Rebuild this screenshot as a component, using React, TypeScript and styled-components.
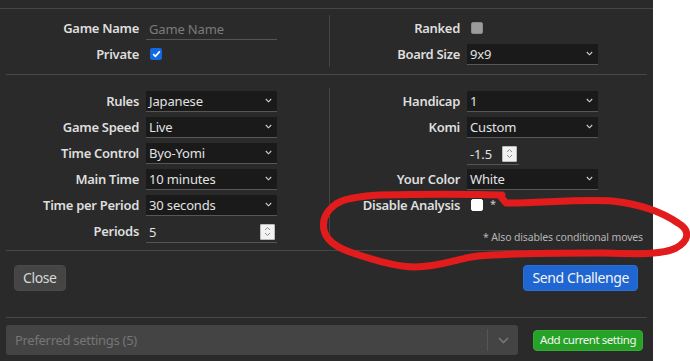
import React from "react";
import styled, { createGlobalStyle } from "styled-components";

const GlobalStyle = createGlobalStyle`
  html, body { margin: 0; padding: 0; background: #ffffff; }
  body { font-family: "Noto Sans", "Open Sans", sans-serif; }
  * { box-sizing: border-box; }
`;

const Page = styled.div`
  position: relative;
  width: 690px;
  height: 361px;
  overflow: hidden;
  background: #ffffff;
`;

const Panel = styled.div`
  width: 653px;
  height: 361px;
  background: #2a2a2a;
  color: #dcdcdc;
  display: flex;
  flex-direction: column;
`;

const TopBar = styled.div`
  height: 9px;
  border-bottom: 1px solid #464646;
  flex: none;
`;

const Section = styled.div<{ $pt: number; $pb: number }>`
  display: grid;
  grid-template-columns: 329px 1fr;
  padding: ${(p) => p.$pt}px 0 ${(p) => p.$pb}px;
  flex: none;
`;

const Rule = styled.div`
  height: 1px;
  margin: 0 6px;
  background: #474747;
  flex: none;
`;

const Column = styled.div<{ $labelW: number; $divider?: boolean }>`
  display: grid;
  grid-template-columns: ${(p) => p.$labelW}px 131px 1fr;
  column-gap: 7px;
  grid-auto-rows: 26px;
  align-items: center;
  border-left: ${(p) => (p.$divider ? "1px solid #444" : "none")};
`;

const Label = styled.div`
  text-align: right;
  font-size: 13px;
  font-weight: 600;
  letter-spacing: -0.3px;
  color: #dedede;
  white-space: nowrap;
  grid-column: 1;
`;

const Field = styled.div`
  grid-column: 2;
  display: flex;
  align-items: center;
`;

const Note = styled.div`
  grid-column: 1 / -1;
  text-align: right;
  padding-right: 10px;
  font-size: 10.5px;
  letter-spacing: -0.15px;
  color: #b4b4b4;
  align-self: end;
  line-height: 15px;
  margin-bottom: -1px;
`;

const SelectBox = styled.div`
  width: 131px;
  height: 21px;
  background: #1a1a1a;
  border-bottom: 1px solid #575757;
  display: flex;
  align-items: center;
  justify-content: space-between;
  padding: 0 5px 0 3px;
  font-size: 13px;
  letter-spacing: -0.15px;
  color: #e2e2e2;
`;

const TextInput = styled.div<{ $w: number }>`
  width: ${(p) => p.$w}px;
  height: 22px;
  border-bottom: 1px solid #555;
  display: flex;
  align-items: center;
  justify-content: space-between;
  padding: 0 2px 0 3px;
  font-size: 13px;
  letter-spacing: -0.15px;
  color: #e2e2e2;
  margin-top: 2px;
`;

const Placeholder = styled.span`
  color: #7b7b7b;
`;

const Spinner = styled.span`
  width: 15px;
  height: 16px;
  background: #f2f2f2;
  border: 1px solid #bdbdbd;
  border-radius: 1px;
  display: flex;
  align-items: center;
  justify-content: center;
`;

const Check = styled.span<{ $kind: "blue" | "gray" | "white" }>`
  width: 12px;
  height: 12px;
  margin-left: 4px;
  border-radius: 2px;
  display: inline-flex;
  align-items: center;
  justify-content: center;
  background: ${(p) =>
    p.$kind === "blue" ? "#1469e0" : p.$kind === "gray" ? "#9c9c9c" : "#ffffff"};
  border: 1px solid
    ${(p) => (p.$kind === "blue" ? "#1469e0" : p.$kind === "gray" ? "#8a8a8a" : "#ffffff")};
`;

const Star = styled.span`
  margin-left: 7px;
  font-size: 11px;
  color: #cfcfcf;
  margin-top: -4px;
`;

const Footer = styled.div`
  display: flex;
  justify-content: space-between;
  align-items: center;
  padding: 14px 15px 26px 14px;
  flex: none;
`;

const Button = styled.button<{ $variant: "plain" | "primary" | "success" }>`
  font-family: "Noto Sans", "Open Sans", sans-serif;
  border: 1px solid
    ${(p) => (p.$variant === "primary" ? "#2a6fd8" : p.$variant === "success" ? "#35ad35" : "#4a4a4a")};
  background: ${(p) =>
    p.$variant === "primary" ? "#1f66d2" : p.$variant === "success" ? "#26a226" : "#454545"};
  color: ${(p) => (p.$variant === "plain" ? "#d8d8d8" : "#f4f4f4")};
  border-radius: 4px;
  font-size: ${(p) => (p.$variant === "success" ? "11.5px" : "14px")};
  letter-spacing: ${(p) => (p.$variant === "success" ? "-0.45px" : "-0.4px")};
  height: ${(p) => (p.$variant === "success" ? "21px" : "26px")};
  padding: 0 ${(p) => (p.$variant === "success" ? "6px" : "8px")};
  line-height: 1;
  cursor: pointer;
  white-space: nowrap;
  flex: none;
`;

const PrefRow = styled.div`
  display: flex;
  align-items: center;
  gap: 15px;
  padding: 7px 9px 0 6px;
  flex: none;
`;

const PrefSelect = styled.div`
  width: 512px;
  height: 30px;
  flex: none;
  background: #444444;
  border-radius: 3px;
  display: flex;
  align-items: center;
  padding-left: 9px;
  font-size: 13px;
  letter-spacing: -0.3px;
  color: #767676;
`;

const PrefText = styled.span`
  flex: 1;
`;

const PrefSep = styled.span`
  width: 1px;
  height: 22px;
  background: #555;
`;

const PrefArrow = styled.span`
  width: 30px;
  display: flex;
  justify-content: center;
`;

const Overlay = styled.svg`
  position: absolute;
  left: 0;
  top: 0;
  pointer-events: none;
`;

const Chevron = () => (
  <svg width="7" height="5" viewBox="0 0 7 5">
    <path d="M0.8 1 L3.5 3.8 L6.2 1" fill="none" stroke="#d0d0d0" strokeWidth="1.1" />
  </svg>
);

const SpinIcon = () => (
  <Spinner>
    <svg width="7" height="11" viewBox="0 0 7 11">
      <path d="M1 4 L3.5 1.5 L6 4 M1 7 L3.5 9.5 L6 7" fill="none" stroke="#8e8e8e" strokeWidth="1" />
    </svg>
  </Spinner>
);

const Select = ({ value }: { value: string }) => (
  <SelectBox>
    <span>{value}</span>
    <Chevron />
  </SelectBox>
);

export default function App() {
  return (
    <Page>
      <GlobalStyle />
      <Panel>
        <TopBar />
        <Section $pt={6} $pb={7}>
          <Column $labelW={139}>
            <Label>Game Name</Label>
            <Field>
              <TextInput $w={131}>
                <Placeholder>Game Name</Placeholder>
              </TextInput>
            </Field>
            <Label>Private</Label>
            <Field>
              <Check $kind="blue">
                <svg width="9" height="8" viewBox="0 0 9 8">
                  <path d="M1.2 4.2 L3.4 6.3 L7.8 1.4" fill="none" stroke="#fff" strokeWidth="1.7" />
                </svg>
              </Check>
            </Field>
          </Column>
          <Column $labelW={130} $divider>
            <Label>Ranked</Label>
            <Field>
              <Check $kind="gray" />
            </Field>
            <Label>Board Size</Label>
            <Field>
              <Select value="9x9" />
            </Field>
          </Column>
        </Section>
        <Rule />
        <Section $pt={13} $pb={6}>
          <Column $labelW={139}>
            <Label>Rules</Label>
            <Field>
              <Select value="Japanese" />
            </Field>
            <Label>Game Speed</Label>
            <Field>
              <Select value="Live" />
            </Field>
            <Label>Time Control</Label>
            <Field>
              <Select value="Byo-Yomi" />
            </Field>
            <Label>Main Time</Label>
            <Field>
              <Select value="10 minutes" />
            </Field>
            <Label>Time per Period</Label>
            <Field>
              <Select value="30 seconds" />
            </Field>
            <Label>Periods</Label>
            <Field>
              <TextInput $w={131}>
                <span>5</span>
                <SpinIcon />
              </TextInput>
            </Field>
          </Column>
          <Column $labelW={130} $divider>
            <Label>Handicap</Label>
            <Field>
              <Select value="1" />
            </Field>
            <Label>Komi</Label>
            <Field>
              <Select value="Custom" />
            </Field>
            <Label />
            <Field>
              <TextInput $w={52}>
                <span>-1.5</span>
                <SpinIcon />
              </TextInput>
            </Field>
            <Label>Your Color</Label>
            <Field>
              <Select value="White" />
            </Field>
            <Label>Disable Analysis</Label>
            <Field>
              <Check $kind="white" />
              <Star>*</Star>
            </Field>
            <Note>* Also disables conditional moves</Note>
          </Column>
        </Section>
        <Rule />
        <Footer>
          <Button $variant="plain">Close</Button>
          <Button $variant="primary">Send Challenge</Button>
        </Footer>
        <Rule />
        <PrefRow>
          <PrefSelect>
            <PrefText>Preferred settings (5)</PrefText>
            <PrefSep />
            <PrefArrow>
              <svg width="11" height="7" viewBox="0 0 11 7">
                <path d="M1 1 L5.5 5.5 L10 1" fill="none" stroke="#777" strokeWidth="1.6" />
              </svg>
            </PrefArrow>
          </PrefSelect>
          <Button $variant="success">Add current setting</Button>
        </PrefRow>
      </Panel>
      <Overlay width="690" height="361" viewBox="0 0 690 361">
        <path
          d="M 502 195 C 470 194 420 194 380 195 C 360 196 345 198 336 204 C 326 211 322 220 324 230 C 326 240 336 247 350 252 C 370 259 395 267 415 267 C 440 267 455 259 478 256 C 510 253 560 253 600 253 C 635 254 662 255 676 248 C 690 240 690 230 678 223 C 662 212 640 204 612 201 C 580 199 540 203 506 203 L 501 197"
          fill="none"
          stroke="#e21c1c"
          strokeWidth="7"
          strokeLinecap="round"
          strokeLinejoin="round"
        />
      </Overlay>
    </Page>
  );
}
